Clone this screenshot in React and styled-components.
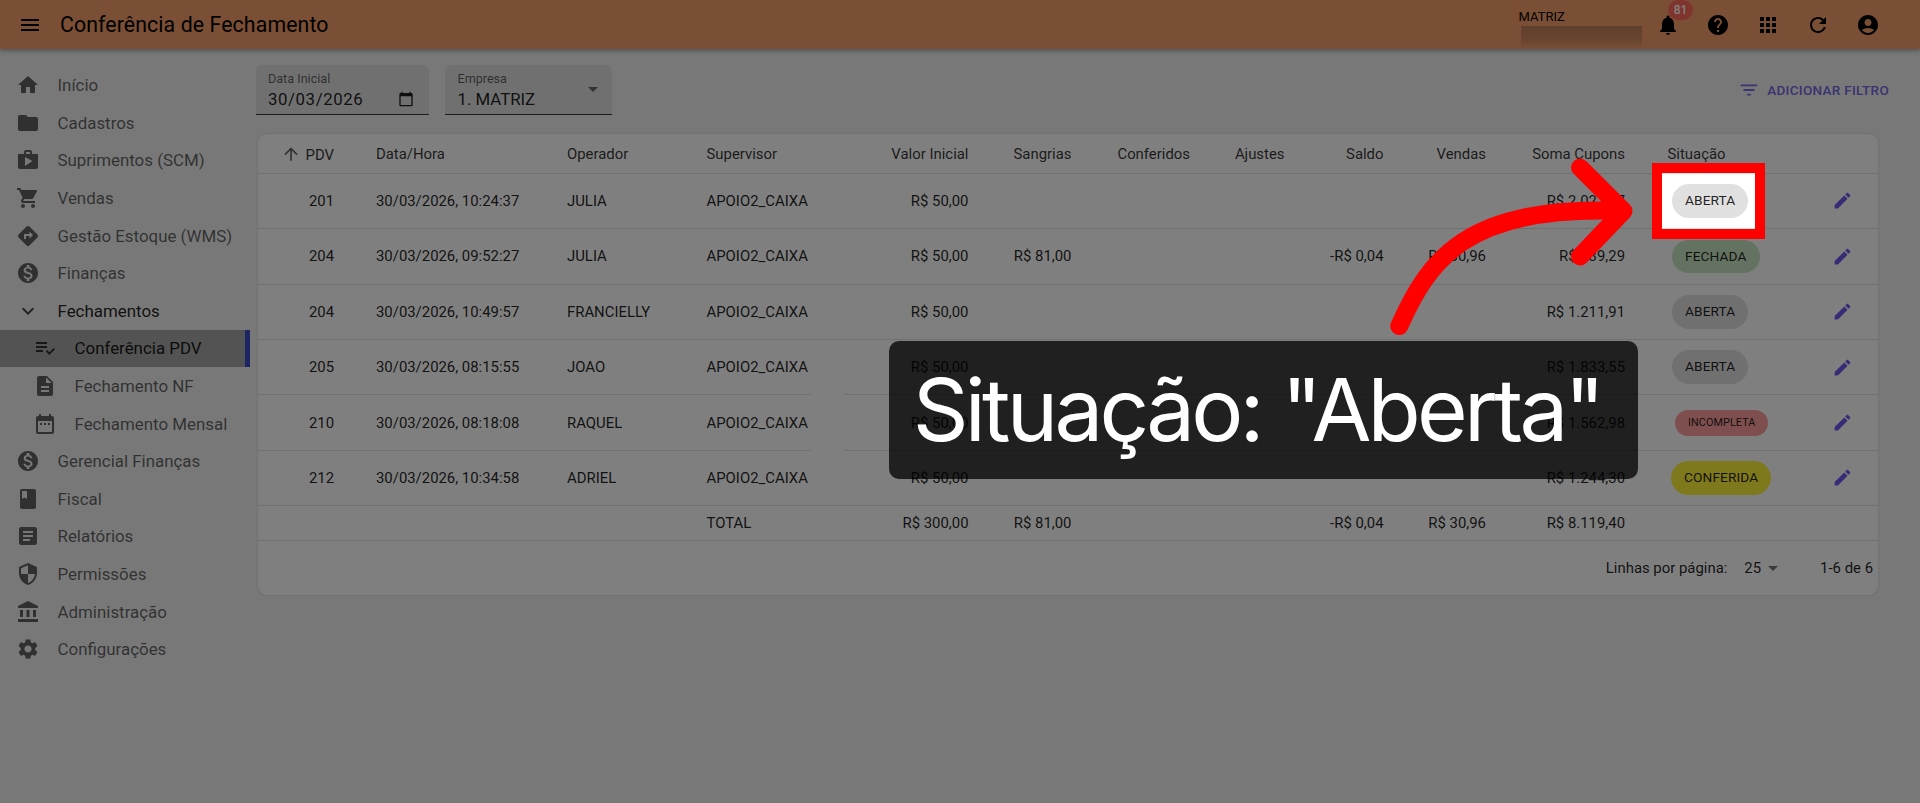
import React from "react";
import styled, { createGlobalStyle } from "styled-components";
import {
  MdMenu, MdNotifications, MdHelp, MdApps, MdRefresh, MdAccountCircle, MdHome, MdFolder, MdShop,
  MdShoppingCart, MdDirections, MdMonetizationOn, MdExpandMore, MdPlaylistAddCheck, MdDescription,
  MdDateRange, MdBook, MdArticle, MdSecurity, MdAccountBalance, MdSettings, MdEdit, MdFilterList,
  MdArrowUpward, MdArrowDropDown, MdCalendarToday,
} from "react-icons/md";

const GlobalStyle = createGlobalStyle`
  html, body { margin: 0; padding: 0; background: #f0f0f0; }
  * { box-sizing: border-box; }
  body { font-family: Roboto, "Liberation Sans", sans-serif; }
`;

const Page = styled.div`
  position: relative;
  width: 100%;
  height: 803px;
  overflow: hidden;
  display: flex;
  flex-direction: column;
  background: #f0f0f0;
`;

const TopBar = styled.header`
  height: 49px;
  flex: none;
  display: flex;
  align-items: center;
  background: #f59e6b;
  box-shadow: 0 2px 4px rgba(0, 0, 0, 0.3);
  padding-left: 18px;
  color: #000;
`;
const MenuButton = styled.div`
  width: 24px;
  height: 24px;
  font-size: 24px;
  line-height: 0;
`;
const PageTitle = styled.h1`
  margin: 0 0 0 18px;
  font-size: 21.3px;
  font-weight: 400;
  letter-spacing: 0.1px;
`;
const CompanyBox = styled.div`
  margin-left: auto;
  width: 124.5px;
  height: 49px;
  position: relative;
  padding-top: 10px;
  font-size: 13px;
  line-height: 14px;
`;
const Redacted = styled.div`
  position: absolute;
  left: 2px;
  top: 26px;
  width: 121px;
  height: 23px;
  background: linear-gradient(#bf7f58, #d28a60 60%, #f59e6b);
`;
const TopIcon = styled.div`
  position: relative;
  width: 50px;
  height: 24px;
  font-size: 24px;
  line-height: 0;
  display: flex;
  justify-content: center;
`;
const Badge = styled.span`
  position: absolute;
  left: 25px;
  top: -13px;
  width: 25px;
  height: 20px;
  border-radius: 10px;
  background: #ff6a5a;
  color: #fff;
  font-size: 12px;
  font-weight: 500;
  line-height: 20px;
  text-align: center;
`;
const TopIcons = styled.div`
  display: flex;
  padding-right: 27px;
`;

const Body = styled.div`
  flex: 1;
  display: flex;
  min-height: 0;
`;
const Sidebar = styled.nav`
  width: 250px;
  flex: none;
  padding-top: 17.4px;
`;
const NavItem = styled.div`
  height: 37.6px;
  display: flex;
  align-items: center;
  padding-left: ${(p) => (p.$sub ? 33 : 16)}px;
  font-size: 16.9px;
  color: ${(p) => (p.$dark ? "rgba(0,0,0,.87)" : "rgba(0,0,0,.6)")};
  background: ${(p) => (p.$selected ? "#a6a6a6" : "transparent")};
  border-right: ${(p) => (p.$selected ? "5px solid #3a4ac4" : "none")};
  svg {
    width: 24px;
    height: 24px;
    flex: none;
    margin-right: 17.5px;
    color: ${(p) => (p.$dark ? "rgba(0,0,0,.7)" : "rgba(0,0,0,.6)")};
  }
`;

const Main = styled.main`
  flex: 1;
  min-width: 0;
  padding: 16px 31px 0 5.5px;
`;
const FilterBar = styled.div`
  display: flex;
  align-items: center;
  height: 50px;
  gap: 16.5px;
`;
const Field = styled.div`
  position: relative;
  width: ${(p) => p.$w}px;
  height: 50px;
  padding: 7px 12.5px 0;
  background: rgba(0, 0, 0, 0.06);
  border-bottom: 1px solid rgba(0, 0, 0, 0.75);
  border-radius: 6px 6px 0 0;
`;
const FieldLabel = styled.div`
  font-size: 12.6px;
  line-height: 13px;
  color: rgba(0, 0, 0, 0.6);
`;
const FieldValue = styled.div`
  margin-top: 3px;
  font-size: 16.8px;
  line-height: 23px;
  letter-spacing: ${(p) => p.$spacing || 0}px;
  color: rgba(0, 0, 0, 0.87);
`;
const FieldIcon = styled.div`
  position: absolute;
  right: ${(p) => p.$right}px;
  top: ${(p) => p.$top}px;
  line-height: 0;
  color: rgba(0, 0, 0, ${(p) => p.$alpha});
  font-size: ${(p) => p.$size}px;
`;
const FilterButton = styled.div`
  margin-left: auto;
  display: flex;
  align-items: center;
  gap: 7px;
  font-size: 13.5px;
  font-weight: 500;
  letter-spacing: 0.3px;
  color: #7468e0;
  svg {
    font-size: 22px;
  }
`;

const Card = styled.section`
  margin: 19px 11px 0 2.5px;
  height: 461px;
  background: #fff;
  border-radius: 9px;
  box-shadow: 0 0 2px rgba(0, 0, 0, 0.18);
  overflow: hidden;
`;
const Table = styled.table`
  width: 100%;
  table-layout: fixed;
  border-collapse: collapse;
  font-size: 14.9px;
  color: rgba(0, 0, 0, 0.87);
`;
const Col = styled.col`
  width: ${(p) => p.$w}px;
`;
const Th = styled.th`
  height: 39.3px;
  padding: 1px 0 0 ${(p) => p.$pad || 0}px;
  font-weight: 400;
  text-align: ${(p) => p.$align || "left"};
  border-bottom: 1px solid #e0e0e0;
  white-space: nowrap;
  color: rgba(0, 0, 0, 0.8);
  svg {
    vertical-align: -4px;
    margin-right: 5px;
    font-size: 20px;
    color: rgba(0, 0, 0, 0.6);
  }
`;
const Td = styled.td`
  height: ${(p) => (p.$total ? 34.7 : 55.4)}px;
  padding: 0 0 0 ${(p) => p.$pad || 0}px;
  text-align: ${(p) => p.$align || "left"};
  border-bottom: 1px solid #e0e0e0;
  white-space: nowrap;
`;
const Chip = styled.span`
  display: inline-block;
  height: ${(p) => (p.$small ? 26 : 33.7)}px;
  margin-left: ${(p) => p.$shift || 0}px;
  padding: 0 13px;
  border-radius: 17px;
  background: ${(p) => p.$bg};
  font-size: ${(p) => (p.$small ? 10.8 : 13.7)}px;
  line-height: ${(p) => (p.$small ? 26 : 33.7)}px;
  letter-spacing: 0.1px;
  color: rgba(0, 0, 0, 0.87);
  vertical-align: middle;
`;
const EditIcon = styled(MdEdit)`
  display: block;
  font-size: 21px;
  color: #7258ee;
`;
const Pagination = styled.div`
  height: 54px;
  display: flex;
  align-items: center;
  justify-content: flex-end;
  padding-right: 5px;
  font-size: 14.9px;
  color: rgba(0, 0, 0, 0.87);
`;
const PerPage = styled.div`
  display: flex;
  align-items: center;
  margin: 0 35px 0 17px;
  svg {
    font-size: 24px;
    color: rgba(0, 0, 0, 0.54);
  }
`;

// the source capture has a short break in two row lines here
const RowLineGap = styled.div`
  position: absolute;
  left: 811px;
  top: 392px;
  width: 33px;
  height: 60px;
  background: #fff;
`;
const Spotlight = styled.div`
  position: absolute;
  left: 1652px;
  top: 163px;
  width: 112.5px;
  height: 75.5px;
  border: 10px solid #ff0000;
  box-shadow: 0 0 0 3000px rgba(0, 0, 0, 0.5);
`;
const ArrowOverlay = styled.svg`
  position: absolute;
  left: 0;
  top: 0;
  pointer-events: none;
`;
const Caption = styled.div`
  position: absolute;
  left: 889px;
  top: 341px;
  width: 749px;
  height: 138px;
  padding-right: 13px;
  border-radius: 10px;
  background: rgba(0, 0, 0, 0.75);
  color: #fff;
  font-family: Inter, "Liberation Sans", sans-serif;
  font-size: 87px;
  font-weight: 400;
  letter-spacing: -3.8px;
  line-height: 138px;
  text-align: center;
  white-space: nowrap;
`;

const navTop = [
  [MdHome, "Início"],
  [MdFolder, "Cadastros"],
  [MdShop, "Suprimentos (SCM)"],
  [MdShoppingCart, "Vendas"],
  [MdDirections, "Gestão Estoque (WMS)"],
  [MdMonetizationOn, "Finanças"],
];
const navBottom = [
  [MdMonetizationOn, "Gerencial Finanças"],
  [MdBook, "Fiscal"],
  [MdArticle, "Relatórios"],
  [MdSecurity, "Permissões"],
  [MdAccountBalance, "Administração"],
  [MdSettings, "Configurações"],
];

const colWidths = [76, 233, 139.5, 150, 112, 103, 118.5, 94.5, 99, 102.5, 139, 165, 88];

const chips = {
  aberta: { label: "ABERTA", bg: "#e0e0e0" },
  fechada: { label: "FECHADA", bg: "#c9e6c2" },
  incompleta: { label: "INCOMPLETA", bg: "#ff9f9f", small: true, shift: 3 },
  conferida: { label: "CONFERIDA", bg: "#fff23c", shift: -1 },
};

const rows = [
  { pdv: 201, data: "30/03/2026, 10:24:37", op: "JULIA", soma: "R$ 2.027,37", chip: "aberta" },
  { pdv: 204, data: "30/03/2026, 09:52:27", op: "JULIA", sangria: "R$ 81,00", saldo: "-R$ 0,04", vendas: "R$ 30,96", soma: "R$ 239,29", chip: "fechada" },
  { pdv: 204, data: "30/03/2026, 10:49:57", op: "FRANCIELLY", soma: "R$ 1.211,91", chip: "aberta" },
  { pdv: 205, data: "30/03/2026, 08:15:55", op: "JOAO", soma: "R$ 1.833,55", chip: "aberta" },
  { pdv: 210, data: "30/03/2026, 08:18:08", op: "RAQUEL", soma: "R$ 1.562,98", chip: "incompleta" },
  { pdv: 212, data: "30/03/2026, 10:34:58", op: "ADRIEL", soma: "R$ 1.244,30", chip: "conferida" },
];

const NavEntry = ({ icon: Icon, label, ...rest }) => (
  <NavItem {...rest}>
    <Icon />
    {label}
  </NavItem>
);

export default function App() {
  return (
    <Page>
      <GlobalStyle />
      <TopBar>
        <MenuButton>
          <MdMenu />
        </MenuButton>
        <PageTitle>Conferência de Fechamento</PageTitle>
        <CompanyBox>
          MATRIZ
          <Redacted />
        </CompanyBox>
        <TopIcons>
          <TopIcon>
            <MdNotifications />
            <Badge>81</Badge>
          </TopIcon>
          <TopIcon>
            <MdHelp />
          </TopIcon>
          <TopIcon>
            <MdApps />
          </TopIcon>
          <TopIcon>
            <MdRefresh />
          </TopIcon>
          <TopIcon>
            <MdAccountCircle />
          </TopIcon>
        </TopIcons>
      </TopBar>
      <Body>
        <Sidebar>
          {navTop.map(([icon, label]) => (
            <NavEntry key={label} icon={icon} label={label} />
          ))}
          <NavEntry icon={MdExpandMore} label="Fechamentos" $dark />
          <NavEntry icon={MdPlaylistAddCheck} label="Conferência PDV" $sub $dark $selected />
          <NavEntry icon={MdDescription} label="Fechamento NF" $sub />
          <NavEntry icon={MdDateRange} label="Fechamento Mensal" $sub />
          {navBottom.map(([icon, label]) => (
            <NavEntry key={label} icon={icon} label={label} />
          ))}
        </Sidebar>
        <Main>
          <FilterBar>
            <Field $w={173}>
              <FieldLabel>Data Inicial</FieldLabel>
              <FieldValue $spacing={0.6}>30/03/2026</FieldValue>
              <FieldIcon $right={15} $top={26} $alpha={0.87} $size={16}>
                <MdCalendarToday />
              </FieldIcon>
            </Field>
            <Field $w={167}>
              <FieldLabel>Empresa</FieldLabel>
              <FieldValue>1. MATRIZ</FieldValue>
              <FieldIcon $right={7} $top={12} $alpha={0.54} $size={24}>
                <MdArrowDropDown />
              </FieldIcon>
            </Field>
            <FilterButton>
              <MdFilterList />
              ADICIONAR FILTRO
            </FilterButton>
          </FilterBar>
          <Card>
            <Table>
              <colgroup>
                {colWidths.map((w, i) => (
                  <Col key={i} $w={w} />
                ))}
              </colgroup>
              <thead>
                <tr>
                  <Th $align="right">
                    <MdArrowUpward />
                    PDV
                  </Th>
                  <Th $pad={42}>Data/Hora</Th>
                  <Th>Operador</Th>
                  <Th>Supervisor</Th>
                  <Th $align="right">Valor Inicial</Th>
                  <Th $align="right">Sangrias</Th>
                  <Th $align="right">Conferidos</Th>
                  <Th $align="right">Ajustes</Th>
                  <Th $align="right">Saldo</Th>
                  <Th $align="right">Vendas</Th>
                  <Th $align="right">Soma Cupons</Th>
                  <Th $pad={42.5}>Situação</Th>
                  <Th />
                </tr>
              </thead>
              <tbody>
                {rows.map((r) => {
                  const chip = chips[r.chip];
                  return (
                    <tr key={r.data}>
                      <Td $align="right">{r.pdv}</Td>
                      <Td $pad={42}>{r.data}</Td>
                      <Td>{r.op}</Td>
                      <Td>APOIO2_CAIXA</Td>
                      <Td $align="right">R$ 50,00</Td>
                      <Td $align="right">{r.sangria}</Td>
                      <Td />
                      <Td />
                      <Td $align="right">{r.saldo}</Td>
                      <Td $align="right">{r.vendas}</Td>
                      <Td $align="right">{r.soma}</Td>
                      <Td $pad={47}>
                        <Chip $bg={chip.bg} $small={chip.small} $shift={chip.shift}>
                          {chip.label}
                        </Chip>
                      </Td>
                      <Td $pad={42}>
                        <EditIcon />
                      </Td>
                    </tr>
                  );
                })}
                <tr>
                  <Td $total />
                  <Td $total />
                  <Td $total />
                  <Td $total>TOTAL</Td>
                  <Td $total $align="right">R$ 300,00</Td>
                  <Td $total $align="right">R$ 81,00</Td>
                  <Td $total />
                  <Td $total />
                  <Td $total $align="right">-R$ 0,04</Td>
                  <Td $total $align="right">R$ 30,96</Td>
                  <Td $total $align="right">R$ 8.119,40</Td>
                  <Td $total />
                  <Td $total />
                </tr>
              </tbody>
            </Table>
            <Pagination>
              Linhas por página:
              <PerPage>
                25
                <MdArrowDropDown />
              </PerPage>
              1-6 de 6
            </Pagination>
          </Card>
        </Main>
      </Body>

      <RowLineGap />
      <Spotlight />
      <ArrowOverlay width="1920" height="803" viewBox="0 0 1920 803">
        <g fill="none" stroke="#ff0000" strokeWidth="18" strokeLinecap="round" strokeLinejoin="round">
          <path d="M1399.3 326 C1428 262 1465 204 1623 211" />
          <path d="M1580 167.5 L1623.5 211 L1580 256.5" />
        </g>
      </ArrowOverlay>
      <Caption>Situação: "Aberta"</Caption>
    </Page>
  );
}
